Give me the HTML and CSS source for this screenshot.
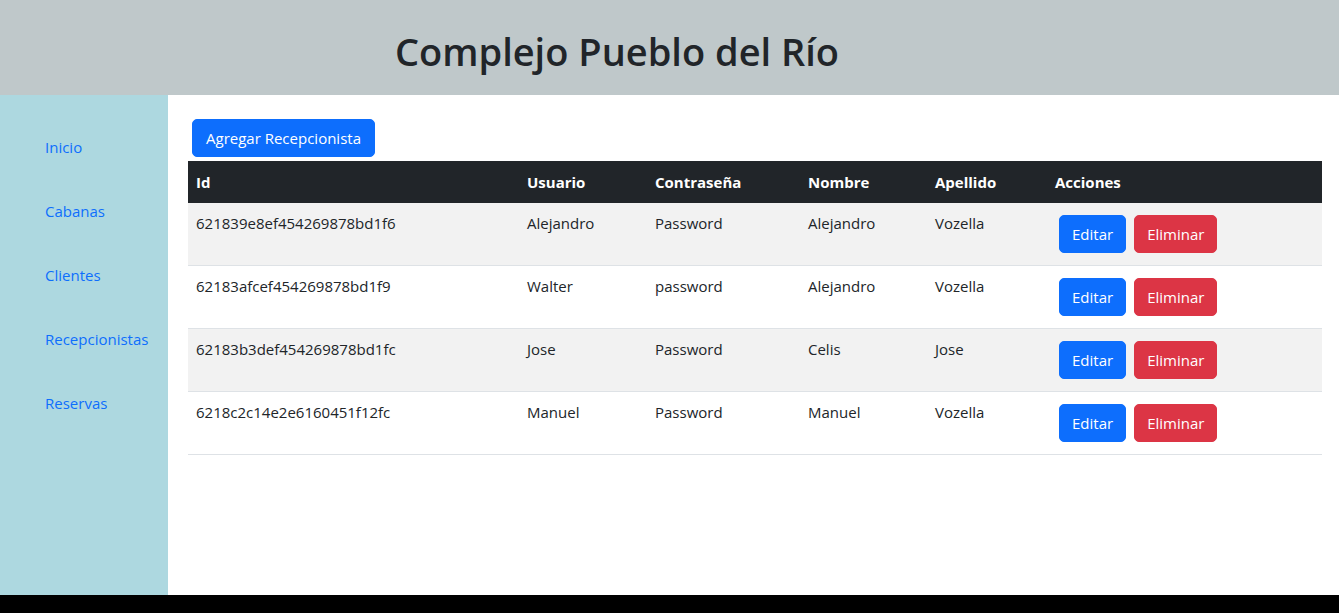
FILE: index.html
```html
<!DOCTYPE html>
<html lang="es">
<head>
<meta charset="utf-8">
<title>Complejo Pueblo del Río</title>
<link rel="stylesheet" href="styles.css">
</head>
<body>
<div class="app">
  <header class="topbar">
    <h1 class="title">Complejo Pueblo del Río</h1>
  </header>
  <div class="layout">
    <nav class="sidebar">
      <a class="nav-link" href="#">Inicio</a>
      <a class="nav-link" href="#">Cabanas</a>
      <a class="nav-link" href="#">Clientes</a>
      <a class="nav-link" href="#">Recepcionistas</a>
      <a class="nav-link" href="#">Reservas</a>
    </nav>
    <main class="content">
      <button class="btn btn-primary btn-add" type="button">Agregar Recepcionista</button>
      <table class="table">
        <colgroup>
          <col class="c-id"><col class="c-user"><col class="c-pass"><col class="c-name"><col class="c-last"><col class="c-act">
        </colgroup>
        <thead>
          <tr><th>Id</th><th>Usuario</th><th>Contraseña</th><th>Nombre</th><th>Apellido</th><th>Acciones</th></tr>
        </thead>
        <tbody>
          <tr>
            <td>621839e8ef454269878bd1f6</td><td>Alejandro</td><td>Password</td><td>Alejandro</td><td>Vozella</td>
            <td><button class="btn btn-primary btn-act" type="button">Editar</button><button class="btn btn-danger btn-act" type="button">Eliminar</button></td>
          </tr>
          <tr>
            <td>62183afcef454269878bd1f9</td><td>Walter</td><td>password</td><td>Alejandro</td><td>Vozella</td>
            <td><button class="btn btn-primary btn-act" type="button">Editar</button><button class="btn btn-danger btn-act" type="button">Eliminar</button></td>
          </tr>
          <tr>
            <td>62183b3def454269878bd1fc</td><td>Jose</td><td>Password</td><td>Celis</td><td>Jose</td>
            <td><button class="btn btn-primary btn-act" type="button">Editar</button><button class="btn btn-danger btn-act" type="button">Eliminar</button></td>
          </tr>
          <tr>
            <td>6218c2c14e2e6160451f12fc</td><td>Manuel</td><td>Password</td><td>Manuel</td><td>Vozella</td>
            <td><button class="btn btn-primary btn-act" type="button">Editar</button><button class="btn btn-danger btn-act" type="button">Eliminar</button></td>
          </tr>
        </tbody>
      </table>
    </main>
  </div>
</div>
</body>
</html>
```

FILE: styles.css
```css
html {
  background: #000;
}
body {
  margin: 0;
  font-family: "Open Sans", "Noto Sans", sans-serif;
  font-size: 15px;
  line-height: 24px;
  color: #212529;
}
.app {
  height: 595px;
  display: flex;
  flex-direction: column;
  background: #fff;
}
.topbar {
  height: 95px;
  flex: none;
  background: #bfc8ca;
  display: flex;
  align-items: center;
  justify-content: center;
  padding: 8px 105px 0 0;
  box-sizing: border-box;
}
.title {
  margin: 0;
  font-size: 38px;
  font-weight: 600;
  line-height: 1.2;
  color: #212529;
}
.layout {
  flex: 1;
  display: flex;
  min-height: 0;
}
.sidebar {
  width: 168px;
  flex: none;
  background: #add8e0;
  display: flex;
  flex-direction: column;
  padding: 40px 0 0 45px;
  box-sizing: border-box;
  gap: 40px;
}
.nav-link {
  color: #0d6efd;
  text-decoration: none;
  line-height: 24px;
}
.content {
  flex: 1;
  padding: 24px 17px 0 20px;
  background: #fff;
}
.btn {
  display: inline-block;
  font-family: inherit;
  font-size: 15px;
  line-height: 24px;
  padding: 6px 12px;
  border: 1px solid transparent;
  border-radius: 5px;
  color: #fff;
  cursor: pointer;
}
.btn-primary {
  background: #0d6efd;
  border-color: #0d6efd;
}
.btn-danger {
  background: #dc3545;
  border-color: #dc3545;
}
.btn-add {
  margin: 0 0 4px 4px;
  padding: 6px 13px;
}
.btn-act {
  margin: 4px;
}
.table {
  width: 100%;
  border-collapse: collapse;
  table-layout: fixed;
}
.c-id { width: 331px; }
.c-user { width: 128px; }
.c-pass { width: 153px; }
.c-name { width: 127px; }
.c-last { width: 120px; }
.table th {
  background: #212529;
  color: #fff;
  font-weight: 700;
  text-align: left;
  padding: 9px 8px 9px 8px;
  border-bottom: 0;
}
.table td {
  padding: 8px;
  vertical-align: top;
  border-bottom: 1px solid #dee2e6;
}
.table tbody tr:nth-child(odd) td {
  background: #f2f2f2;
}
```
